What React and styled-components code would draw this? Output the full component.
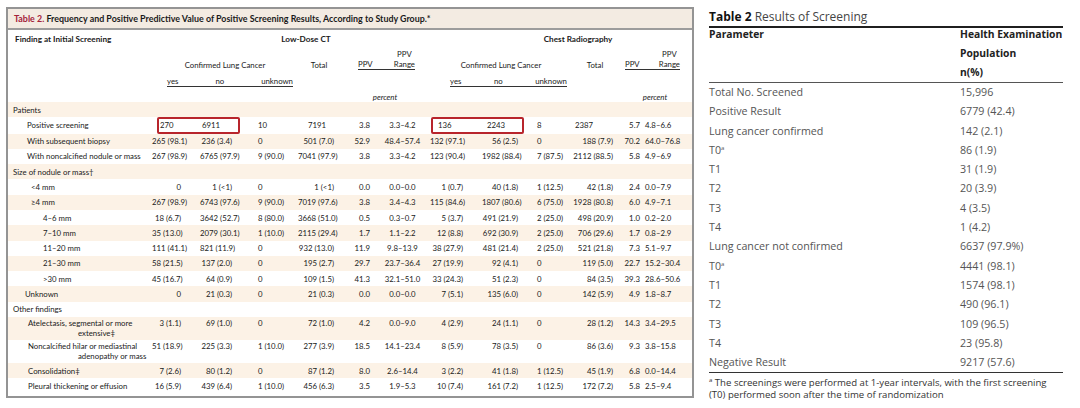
import React from "react";
import styled, { createGlobalStyle } from "styled-components";

// global reset
const GlobalStyle = createGlobalStyle`
  html, body {
    margin: 0;
    padding: 0;
    background: #ffffff;
  }
  body {
    width: 1080px;
    height: 408px;
    overflow: hidden;
  }
`;

const COLS = "144px 48px 50px 48px 42px 35px 55px 52px 48px 42px 46px 24px 50px";

const Page = styled.div`
  display: flex;
  align-items: flex-start;
  width: 1080px;
  height: 408px;
`;

// left: NEJM table
const Frame = styled.section`
  margin: 7px 0 0 6px;
  width: 688px;
  box-sizing: border-box;
  border: 2px solid #949494;
  padding-bottom: 2px;
  font-family: Lato, "Liberation Sans", sans-serif;
  font-size: 7.8px;
  color: #1a1a1a;
`;

const TitleBar = styled.div`
  height: 19px;
  line-height: 19px;
  padding-left: 6px;
  background: #f3ebe2;
  border-bottom: 2px solid #9c9c9c;
  font-size: 8.9px;
  font-weight: 700;
  white-space: nowrap;
`;

const TitleNum = styled.span`
  color: #a3223a;
`;

const HeadRow = styled.div`
  display: grid;
  grid-template-columns: ${COLS};
  height: ${(p) => p.$h}px;
  align-items: ${(p) => p.$align || "end"};
  line-height: 10px;
`;

const HeadCell = styled.div`
  grid-column: ${(p) => p.$col};
  text-align: ${(p) => p.$ta || "center"};
  padding-left: ${(p) => p.$pl || 0}px;
  font-size: ${(p) => (p.$bold ? "8.2px" : "inherit")};
  font-weight: ${(p) => (p.$bold ? 700 : 400)};
  font-style: ${(p) => (p.$italic ? "italic" : "normal")};
  white-space: nowrap;
`;

const PpvGroup = styled.div`
  grid-column: ${(p) => p.$col};
  margin-left: ${(p) => p.$ml}px;
  margin-right: ${(p) => p.$mr}px;
  display: flex;
  justify-content: space-between;
  align-items: flex-end;
  border-bottom: 1px solid #333;
  text-align: center;
`;

const SubHead = styled.div`
  grid-column: ${(p) => p.$col};
  margin-left: ${(p) => p.$ml}px;
  margin-right: ${(p) => p.$mr}px;
  display: flex;
  justify-content: space-between;
  border-bottom: 1px solid #333;
`;

const DataRow = styled.div`
  display: grid;
  grid-template-columns: ${COLS};
  align-items: start;
  padding: ${(p) => (p.$tall ? "1.5px 0" : "2.65px 0")};
  line-height: 10px;
  background: ${(p) => (p.$shade ? "#fcf2e6" : "#ffffff")};
`;

const Label = styled.div`
  padding-left: ${(p) => p.$indent}px;
  white-space: nowrap;
`;

const Hang = styled.div`
  padding-left: 50px;
  white-space: nowrap;
`;

const Val = styled.div`
  text-align: ${(p) => p.$a};
  padding-left: ${(p) => (p.$a === "left" ? p.$p : 0)}px;
  padding-right: ${(p) => (p.$a === "right" ? p.$p : 0)}px;
  white-space: nowrap;
`;

const Highlight = styled.div`
  grid-column: ${(p) => p.$col};
  position: relative;
  z-index: 1;
  margin: -3px 0 -3px ${(p) => p.$ml}px;
  width: ${(p) => p.$w}px;
  height: 17px;
  box-sizing: border-box;
  border: 2px solid #b8252c;
  border-radius: 2px;
  display: flex;
  align-items: center;
  padding-left: ${(p) => p.$pl}px;
`;

const HighNum = styled.span`
  width: ${(p) => p.$w}px;
`;

// right: second table
const Side = styled.section`
  margin-left: 15px;
  width: 354px;
  font-family: "Open Sans", "Liberation Sans", sans-serif;
  color: #555;
`;

const SideTitle = styled.div`
  padding: 9px 0 1px;
  line-height: 16px;
  font-size: 12px;
  color: #444;
  border-bottom: 2px solid #1f1f1f;
  white-space: nowrap;
`;

const SideTitleStrong = styled.span`
  color: #111;
  font-weight: 700;
`;

const SideHead = styled.div`
  display: grid;
  grid-template-columns: 251px 1fr;
  margin-top: -3px;
  line-height: 19px;
  font-size: 10.3px;
  font-weight: 700;
  color: #222;
  border-bottom: 1px solid #555;
  white-space: nowrap;
`;

const SideBody = styled.div`
  border-bottom: 1px solid #333;
`;

const SideRow = styled.div`
  display: grid;
  grid-template-columns: 251px 1fr;
  height: 19.3px;
  line-height: 19.3px;
  font-size: 10.7px;
  white-space: nowrap;
`;

const Sup = styled.sup`
  font-size: 6px;
  line-height: 0;
  vertical-align: 4px;
`;

const Footnote = styled.div`
  padding-top: 4px;
  line-height: 12px;
  font-size: 9.6px;
  color: #333;
  white-space: nowrap;
`;

const COL = [
  null,
  { a: "right", p: 19 },
  { a: "right", p: 18 },
  { a: "left", p: 8 },
  { a: "right", p: 6 },
  { a: "right", p: 5 },
  { a: "center", p: 0 },
  { a: "right", p: 19 },
  { a: "right", p: 12 },
  { a: "left", p: 7 },
  { a: "right", p: 5 },
  { a: "right", p: 2 },
  { a: "left", p: 3 },
];

const rows = [
  { label: "Patients", indent: 5 },
  { label: "Positive screening", indent: 19, boxed: true },
  { label: "With subsequent biopsy", indent: 19, v: ["265 (98.1)", "236 (3.4)", "0", "501 (7.0)", "52.9", "48.4–57.4", "132 (97.1)", "56 (2.5)", "0", "188 (7.9)", "70.2", "64.0–76.8"] },
  { label: "With noncalcified nodule or mass", indent: 19, v: ["267 (98.9)", "6765 (97.9)", "9 (90.0)", "7041 (97.9)", "3.8", "3.3–4.2", "123 (90.4)", "1982 (88.4)", "7 (87.5)", "2112 (88.5)", "5.8", "4.9–6.9"] },
  { label: "Size of nodule or mass†", indent: 5 },
  { label: "<4 mm", indent: 23, v: ["0", "1 (<1)", "0", "1 (<1)", "0.0", "0.0–0.0", "1 (0.7)", "40 (1.8)", "1 (12.5)", "42 (1.8)", "2.4", "0.0–7.9"] },
  { label: "≥4 mm", indent: 23, v: ["267 (98.9)", "6743 (97.6)", "9 (90.0)", "7019 (97.6)", "3.8", "3.4–4.3", "115 (84.6)", "1807 (80.6)", "6 (75.0)", "1928 (80.8)", "6.0", "4.9–7.1"] },
  { label: "4–6 mm", indent: 35, v: ["18 (6.7)", "3642 (52.7)", "8 (80.0)", "3668 (51.0)", "0.5", "0.3–0.7", "5 (3.7)", "491 (21.9)", "2 (25.0)", "498 (20.9)", "1.0", "0.2–2.0"] },
  { label: "7–10 mm", indent: 35, v: ["35 (13.0)", "2079 (30.1)", "1 (10.0)", "2115 (29.4)", "1.7", "1.1–2.2", "12 (8.8)", "692 (30.9)", "2 (25.0)", "706 (29.6)", "1.7", "0.8–2.9"] },
  { label: "11–20 mm", indent: 35, v: ["111 (41.1)", "821 (11.9)", "0", "932 (13.0)", "11.9", "9.8–13.9", "38 (27.9)", "481 (21.4)", "2 (25.0)", "521 (21.8)", "7.3", "5.1–9.7"] },
  { label: "21–30 mm", indent: 35, v: ["58 (21.5)", "137 (2.0)", "0", "195 (2.7)", "29.7", "23.7–36.4", "27 (19.9)", "92 (4.1)", "0", "119 (5.0)", "22.7", "15.2–30.4"] },
  { label: ">30 mm", indent: 35, v: ["45 (16.7)", "64 (0.9)", "0", "109 (1.5)", "41.3", "32.1–51.0", "33 (24.3)", "51 (2.3)", "0", "84 (3.5)", "39.3", "28.6–50.6"] },
  { label: "Unknown", indent: 17, v: ["0", "21 (0.3)", "0", "21 (0.3)", "0.0", "0.0–0.0", "7 (5.1)", "135 (6.0)", "0", "142 (5.9)", "4.9", "1.8–8.7"] },
  { label: "Other findings", indent: 5 },
  { label: "Atelectasis, segmental or more", more: "extensive‡", indent: 20, v: ["3 (1.1)", "69 (1.0)", "0", "72 (1.0)", "4.2", "0.0–9.0", "4 (2.9)", "24 (1.1)", "0", "28 (1.2)", "14.3", "3.4–29.5"] },
  { label: "Noncalcified hilar or mediastinal", more: "adenopathy or mass", indent: 20, v: ["51 (18.9)", "225 (3.3)", "1 (10.0)", "277 (3.9)", "18.5", "14.1–23.4", "8 (5.9)", "78 (3.5)", "0", "86 (3.6)", "9.3", "3.8–15.8"] },
  { label: "Consolidation‡", indent: 20, v: ["7 (2.6)", "80 (1.2)", "0", "87 (1.2)", "8.0", "2.6–14.4", "3 (2.2)", "41 (1.8)", "1 (12.5)", "45 (1.9)", "6.8", "0.0–14.4"] },
  { label: "Pleural thickening or effusion", indent: 20, v: ["16 (5.9)", "439 (6.4)", "1 (10.0)", "456 (6.3)", "3.5", "1.9–5.3", "10 (7.4)", "161 (7.2)", "1 (12.5)", "172 (7.2)", "5.8", "2.5–9.4"] },
];

const screening = [
  { label: "Total No. Screened", value: "15,996" },
  { label: "Positive Result", value: "6779 (42.4)" },
  { label: "Lung cancer confirmed", value: "142 (2.1)" },
  { label: "T0", sup: true, value: "86 (1.9)" },
  { label: "T1", value: "31 (1.9)" },
  { label: "T2", value: "20 (3.9)" },
  { label: "T3", value: "4 (3.5)" },
  { label: "T4", value: "1 (4.2)" },
  { label: "Lung cancer not confirmed", value: "6637 (97.9%)" },
  { label: "T0", sup: true, value: "4441 (98.1)" },
  { label: "T1", value: "1574 (98.1)" },
  { label: "T2", value: "490 (96.1)" },
  { label: "T3", value: "109 (96.5)" },
  { label: "T4", value: "23 (95.8)" },
  { label: "Negative Result", value: "9217 (57.6)" },
];

function BoxedRow({ row, shade }) {
  return (
    <DataRow $shade={shade}>
      <Label $indent={row.indent}>{row.label}</Label>
      <Highlight $col="2 / 4" $ml={5} $w={83} $pl={1}>
        <HighNum $w={42}>270</HighNum>
        <span>6911</span>
      </Highlight>
      <Val $a="left" $p={8}>10</Val>
      <Val $a="left" $p={10}>7191</Val>
      <Val $a="right" $p={5}>3.8</Val>
      <Val $a="center" $p={0}>3.3–4.2</Val>
      <Highlight $col="8 / 10" $ml={1} $w={93} $pl={5}>
        <HighNum $w={49}>136</HighNum>
        <span>2243</span>
      </Highlight>
      <Val $a="left" $p={7}>8</Val>
      <Val $a="left" $p={3}>2387</Val>
      <Val $a="right" $p={2}>5.7</Val>
      <Val $a="left" $p={3}>4.8–6.6</Val>
    </DataRow>
  );
}

export default function App() {
  return (
    <Page>
      <GlobalStyle />
      <Frame>
        <TitleBar>
          <TitleNum>Table 2.</TitleNum> Frequency and Positive Predictive Value of Positive Screening Results, According to Study Group.*
        </TitleBar>

        <HeadRow $h={18} $align="center">
          <HeadCell $col="1 / 2" $ta="left" $pl={7} $bold>Finding at Initial Screening</HeadCell>
          <HeadCell $col="2 / 8" $pl={30} $bold>Low-Dose CT</HeadCell>
          <HeadCell $col="8 / 14" $pl={34} $bold>Chest Radiography</HeadCell>
        </HeadRow>

        <HeadRow $h={22}>
          <HeadCell $col="2 / 5">Confirmed Lung Cancer</HeadCell>
          <HeadCell $col="5 / 6">Total</HeadCell>
          <PpvGroup $col="6 / 8" $ml={18} $mr={15}>
            <span>PPV</span>
            <span>PPV<br />Range</span>
          </PpvGroup>
          <HeadCell $col="8 / 11">Confirmed Lung Cancer</HeadCell>
          <HeadCell $col="11 / 12">Total</HeadCell>
          <PpvGroup $col="12 / 14" $ml={7} $mr={12}>
            <span>PPV</span>
            <span>PPV<br />Range</span>
          </PpvGroup>
        </HeadRow>

        <HeadRow $h={17}>
          <SubHead $col="2 / 5" $ml={15} $mr={5}>
            <span>yes</span>
            <span>no</span>
            <span>unknown</span>
          </SubHead>
          <SubHead $col="8 / 11" $ml={20} $mr={5}>
            <span>yes</span>
            <span>no</span>
            <span>unknown</span>
          </SubHead>
        </HeadRow>

        <HeadRow $h={15}>
          <HeadCell $col="6 / 8" $italic>percent</HeadCell>
          <HeadCell $col="12 / 14" $italic>percent</HeadCell>
        </HeadRow>

        {rows.map((row, i) => {
          const shade = i % 2 === 0;
          if (row.boxed) return <BoxedRow key={i} row={row} shade={shade} />;
          return (
            <DataRow key={i} $shade={shade} $tall={!!row.more}>
              <Label $indent={row.indent}>
                {row.label}
                {row.more && <Hang>{row.more}</Hang>}
              </Label>
              {row.v &&
                row.v.map((val, j) => (
                  <Val key={j} $a={COL[j + 1].a} $p={COL[j + 1].p}>
                    {val}
                  </Val>
                ))}
            </DataRow>
          );
        })}
      </Frame>

      <Side>
        <SideTitle>
          <SideTitleStrong>Table 2</SideTitleStrong> Results of Screening
        </SideTitle>
        <SideHead>
          <div>Parameter</div>
          <div>
            Health Examination
            <br />
            Population
            <br />
            n(%)
          </div>
        </SideHead>
        <SideBody>
          {screening.map((r, i) => (
            <SideRow key={i}>
              <div>
                {r.label}
                {r.sup && <Sup>a</Sup>}
              </div>
              <div>{r.value}</div>
            </SideRow>
          ))}
        </SideBody>
        <Footnote>
          <Sup>a</Sup> The screenings were performed at 1-year intervals, with the first screening
          <br />
          (T0) performed soon after the time of randomization
        </Footnote>
      </Side>
    </Page>
  );
}
